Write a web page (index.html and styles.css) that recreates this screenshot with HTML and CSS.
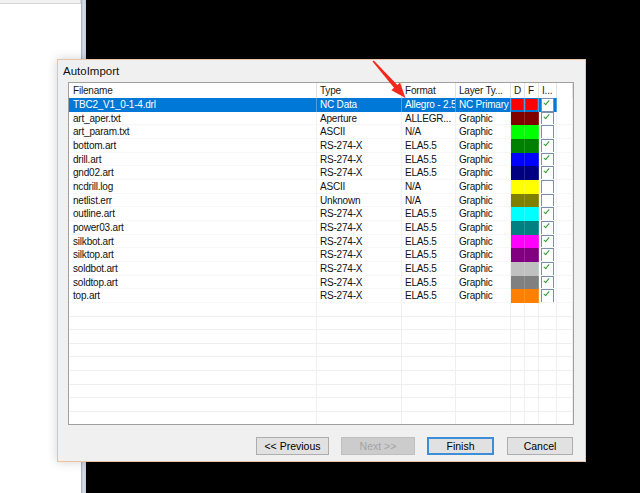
FILE: index.html
```html
<!DOCTYPE html>
<html>
<head>
<meta charset="utf-8">
<link rel="stylesheet" href="styles.css">
</head>
<body>
<div class="desktop">
  <div class="leftpane"><div class="leftpane-top"></div></div>
  <div class="splitter"></div>
  <div class="canvas"></div>
</div>

<div class="dialog">
  <div class="title">AutoImport</div>
  <div class="list">
    <div class="grid header">
      <div class="h">Filename</div>
      <div class="h">Type</div>
      <div class="h">Format</div>
      <div class="h">Layer Ty...</div>
      <div class="h c">D</div>
      <div class="h c">F</div>
      <div class="h">I...</div>
      <div class="h last"></div>
    </div>
    <div class="body">
      <div class="grid row sel"><div>TBC2_V1_0-1-4.drl</div><div>NC Data</div><div>Allegro - 2.5</div><div>NC Primary</div><div class="sw"><span style="background:#ff0000"></span></div><div class="sw"><span style="background:#ff0000"></span></div><div class="ck"><i class="on"></i></div><div></div></div>
      <div class="grid row"><div>art_aper.txt</div><div>Aperture</div><div>ALLEGR...</div><div>Graphic</div><div class="col" style="background:#800000"></div><div class="col" style="background:#800000"></div><div class="ck"><i class="on"></i></div><div></div></div>
      <div class="grid row"><div>art_param.txt</div><div>ASCII</div><div>N/A</div><div>Graphic</div><div class="col" style="background:#00ff00"></div><div class="col" style="background:#00ff00"></div><div class="ck"><i></i></div><div></div></div>
      <div class="grid row"><div>bottom.art</div><div>RS-274-X</div><div>ELA5.5</div><div>Graphic</div><div class="col" style="background:#008000"></div><div class="col" style="background:#008000"></div><div class="ck"><i class="on"></i></div><div></div></div>
      <div class="grid row"><div>drill.art</div><div>RS-274-X</div><div>ELA5.5</div><div>Graphic</div><div class="col" style="background:#0000ff"></div><div class="col" style="background:#0000ff"></div><div class="ck"><i class="on"></i></div><div></div></div>
      <div class="grid row"><div>gnd02.art</div><div>RS-274-X</div><div>ELA5.5</div><div>Graphic</div><div class="col" style="background:#000080"></div><div class="col" style="background:#000080"></div><div class="ck"><i class="on"></i></div><div></div></div>
      <div class="grid row"><div>ncdrill.log</div><div>ASCII</div><div>N/A</div><div>Graphic</div><div class="col" style="background:#ffff00"></div><div class="col" style="background:#ffff00"></div><div class="ck"><i></i></div><div></div></div>
      <div class="grid row"><div>netlist.err</div><div>Unknown</div><div>N/A</div><div>Graphic</div><div class="col" style="background:#808000"></div><div class="col" style="background:#808000"></div><div class="ck"><i></i></div><div></div></div>
      <div class="grid row"><div>outline.art</div><div>RS-274-X</div><div>ELA5.5</div><div>Graphic</div><div class="col" style="background:#00ffff"></div><div class="col" style="background:#00ffff"></div><div class="ck"><i class="on"></i></div><div></div></div>
      <div class="grid row"><div>power03.art</div><div>RS-274-X</div><div>ELA5.5</div><div>Graphic</div><div class="col" style="background:#008080"></div><div class="col" style="background:#008080"></div><div class="ck"><i class="on"></i></div><div></div></div>
      <div class="grid row"><div>silkbot.art</div><div>RS-274-X</div><div>ELA5.5</div><div>Graphic</div><div class="col" style="background:#ff00ff"></div><div class="col" style="background:#ff00ff"></div><div class="ck"><i class="on"></i></div><div></div></div>
      <div class="grid row"><div>silktop.art</div><div>RS-274-X</div><div>ELA5.5</div><div>Graphic</div><div class="col" style="background:#800080"></div><div class="col" style="background:#800080"></div><div class="ck"><i class="on"></i></div><div></div></div>
      <div class="grid row"><div>soldbot.art</div><div>RS-274-X</div><div>ELA5.5</div><div>Graphic</div><div class="col" style="background:#c0c0c0"></div><div class="col" style="background:#c0c0c0"></div><div class="ck"><i class="on"></i></div><div></div></div>
      <div class="grid row"><div>soldtop.art</div><div>RS-274-X</div><div>ELA5.5</div><div>Graphic</div><div class="col" style="background:#808080"></div><div class="col" style="background:#808080"></div><div class="ck"><i class="on"></i></div><div></div></div>
      <div class="grid row"><div>top.art</div><div>RS-274-X</div><div>ELA5.5</div><div>Graphic</div><div class="col" style="background:#ff8000"></div><div class="col" style="background:#ff8000"></div><div class="ck"><i class="on"></i></div><div></div></div>
      <div class="grid row empty"><div></div><div></div><div></div><div></div><div></div><div></div><div></div><div></div></div>
      <div class="grid row empty"><div></div><div></div><div></div><div></div><div></div><div></div><div></div><div></div></div>
      <div class="grid row empty"><div></div><div></div><div></div><div></div><div></div><div></div><div></div><div></div></div>
      <div class="grid row empty"><div></div><div></div><div></div><div></div><div></div><div></div><div></div><div></div></div>
      <div class="grid row empty"><div></div><div></div><div></div><div></div><div></div><div></div><div></div><div></div></div>
      <div class="grid row empty"><div></div><div></div><div></div><div></div><div></div><div></div><div></div><div></div></div>
      <div class="grid row empty"><div></div><div></div><div></div><div></div><div></div><div></div><div></div><div></div></div>
      <div class="grid row empty"><div></div><div></div><div></div><div></div><div></div><div></div><div></div><div></div></div>
      <div class="grid row empty"><div></div><div></div><div></div><div></div><div></div><div></div><div></div><div></div></div>
    </div>
  </div>
  <div class="buttons">
    <div class="btn prev">&lt;&lt; Previous</div>
    <div class="btn next disabled">Next &gt;&gt;</div>
    <div class="btn finish default">Finish</div>
    <div class="btn cancel">Cancel</div>
  </div>
</div>

<svg class="arrow" width="640" height="493" viewBox="0 0 640 493">
  <polygon points="372.5,61.5 373.8,60.6 397.4,85.0 400.0,82.6 405.5,98 391.4,90.2 394.0,87.8" fill="#f2281c"/>
</svg>
</body>
</html>
```

FILE: styles.css
```css
* { box-sizing: border-box; }
html, body { margin: 0; padding: 0; }
body {
  width: 640px;
  height: 493px;
  overflow: hidden;
  position: relative;
  font-family: "Liberation Sans", Arial, sans-serif;
  font-size: 10px;
  letter-spacing: -0.2px;
  color: #000;
  background: #000;
}

.desktop {
  display: flex;
  width: 640px;
  height: 493px;
}
.leftpane {
  width: 81px;
  background: #fff;
}
.leftpane-top {
  height: 4px;
  background: #f2f2f2;
  border-bottom: 1px solid #d6d6d6;
  border-right: 1px solid #d6d6d6;
}
.splitter {
  width: 5px;
  background: linear-gradient(to right, #9aa7bb, #d5dce7 40%, #c3ccd9);
}
.canvas {
  flex: 1;
  background: #000;
}

.dialog {
  position: absolute;
  left: 57px;
  top: 59px;
  width: 529px;
  height: 403px;
  background: #f0f0f0;
  border: 1px solid #e9c3a3;
  box-shadow: 0 0 10px rgba(0,0,0,0.18);
  padding: 4px 11px 0 10px;
  display: flex;
  flex-direction: column;
}
.title {
  font-size: 11.5px;
  letter-spacing: 0;
  line-height: 14px;
  height: 14px;
  margin-left: -5px;
  margin-bottom: 4px;
  color: #111;
}
.list {
  height: 343px;
  background: #fff;
  border: 1px solid #a0a0a0;
  overflow: hidden;
  display: flex;
  flex-direction: column;
}
.grid {
  display: grid;
  grid-template-columns: 248px 85px 54px 55px 14px 14px 18px 1fr;
}
.header {
  height: 15px;
  flex: none;
}
.header .h {
  border-right: 1px solid #e3e3e3;
  line-height: 15px;
  padding-left: 3px;
  color: #1a1a1a;
  white-space: nowrap;
  overflow: hidden;
}
.header .h:first-child { padding-left: 4px; }
.header .h.c { padding-left: 3px; }
.header .h.last { border-right: 1px solid #e3e3e3; }

.body {
  flex: 1;
  overflow: hidden;
}
.row {
  height: 13.66px;
}
.row > div {
  line-height: 13.66px;
  padding-left: 3px;
  white-space: nowrap;
  overflow: hidden;
  color: #111;
  border-right: 1px solid #f2f2f2;
  border-bottom: 1px solid #f7f7f7;
}
.row > div:first-child { padding-left: 4px; }
.row > div.col {
  border-right: 1px solid rgba(255,255,255,0.15);
  border-bottom: none;
}
.row.empty > div {
  border-bottom: 1px solid #efefef;
  border-right: 1px solid #efefef;
}

.row.sel > div {
  background: #0078d7;
  color: #fff;
  border-right: 1px solid #4aa0e6;
  border-bottom: none;
}
.row.sel > div:last-child {
  background: #fff;
  border-right: 1px solid #f2f2f2;
}
.row.sel > div.ck { background: #0078d7; }
.sw {
  padding: 1px 0 0 1px !important;
}
.sw span {
  display: block;
  width: 11px;
  height: 11px;
}

.ck {
  padding: 0 0 0 2px !important;
  position: relative;
}
.row:not(.sel) > div.ck { background: #fff; }
.ck i {
  position: absolute;
  left: 2px;
  top: 0;
  width: 13px;
  height: 14px;
  background: #fff;
  border: 1px solid #7a8fb0;
}
.ck i.on::after {
  content: "";
  position: absolute;
  left: 3px;
  top: 0px;
  width: 2px;
  height: 5px;
  border-right: 1.5px solid #2e9a2e;
  border-bottom: 1.5px solid #2e9a2e;
  transform: rotate(40deg);
}

.buttons {
  display: flex;
  justify-content: flex-end;
  margin-top: 12px;
  padding-right: 1px;
}
.btn {
  height: 18px;
  line-height: 16px;
  text-align: center;
  background: #e1e1e1;
  border: 1px solid #adadad;
  color: #000;
  font-size: 10.5px;
  letter-spacing: 0;
}
.prev { width: 73px; }
.next { width: 74px; margin-left: 12px; }
.finish { width: 67px; margin-left: 12px; }
.cancel { width: 66px; margin-left: 13px; }
.disabled {
  background: #cccccc;
  border-color: #bfbfbf;
  color: #a3a3a3;
}
.default {
  border: 2px solid #3c8fd6;
  line-height: 14px;
}

.arrow {
  position: absolute;
  left: 0;
  top: 0;
  pointer-events: none;
}
```
